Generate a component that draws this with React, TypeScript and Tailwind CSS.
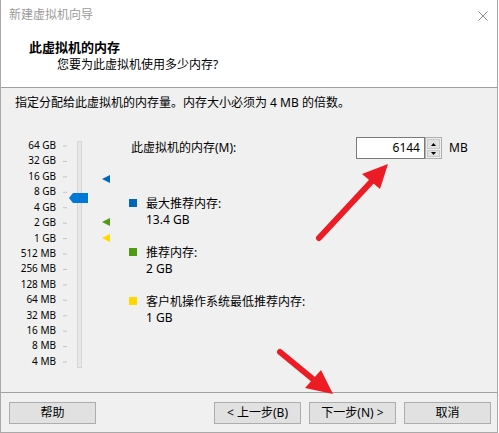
import React from 'react';

// Memory sizes shown along the slider, top to bottom
const sizes = [
  '64 GB', '32 GB', '16 GB', '8 GB', '4 GB', '2 GB', '1 GB',
  '512 MB', '256 MB', '128 MB', '64 MB', '32 MB', '16 MB', '8 MB', '4 MB',
];

const STEP = 15.43;

const legend = [
  { color: 'bg-[#0067b8]', title: '最大推荐内存:', value: '13.4 GB' },
  { color: 'bg-[#4f9a12]', title: '推荐内存:', value: '2 GB' },
  { color: 'bg-[#ffd800]', title: '客户机操作系统最低推荐内存:', value: '1 GB' },
];

const MemorySlider: React.FC = () => (
  <svg width="56" height="236" className="shrink-0">
    {sizes.map((_, i) => (
      <rect key={i} x="7" y={8.5 + i * STEP} width="4" height="1" fill="#c4c4c4" />
    ))}
    <rect x="21.5" y="4.5" width="4" height="226" fill="#e7e7e7" stroke="#d6d6d6" />
    <polygon points="13,61 17,56 32,56 32,66 17,66" fill="#0078d7" />
    <polygon points="46,42 54,38 54,46" fill="#0067b8" />
    <polygon points="46,85 54,81 54,89" fill="#4f9a12" />
    <polygon points="46,101 54,97 54,105" fill="#ffd800" />
  </svg>
);

const SpinBox: React.FC = () => (
  <div className="flex">
    <div className="w-[69px] h-[22px] border border-[#7a7a7a] bg-white flex items-center justify-end pr-[4px] text-[12px] leading-none">
      6144
    </div>
    <div className="w-[17px] h-[22px] flex flex-col border border-[#adadad] bg-[#f0f0f0]">
      <div className="h-[10px] m-[1px] mb-0 bg-[#e1e1e1] border border-[#c8c8c8] flex items-center justify-center">
        <svg width="5" height="3"><polygon points="2.5,0 5,3 0,3" fill="#000" /></svg>
      </div>
      <div className="flex-1 m-[1px] bg-[#e1e1e1] border border-[#c8c8c8] flex items-center justify-center">
        <svg width="5" height="3"><polygon points="0,0 5,0 2.5,3" fill="#000" /></svg>
      </div>
    </div>
  </div>
);

const WizardButton: React.FC<{ label: string; className?: string }> = ({ label, className }) => (
  <button
    type="button"
    className={`w-[87px] h-[22px] bg-[#e1e1e1] border border-[#adadad] text-[12px] leading-none text-black ${className ?? ''}`}
  >
    {label}
  </button>
);

const App: React.FC = () => {
  return (
    <div className="w-[499px] h-[433px] bg-white font-['Noto_Sans','Noto_Sans_CJK_SC',sans-serif] text-black">
      <div className="relative w-[498px] h-[433px] flex flex-col border-l border-r border-b border-[#a9a9a9]">
        {/* title bar */}
        <div className="h-[30px] flex items-center justify-between pl-[8px] pr-[9px] bg-white">
          <span className="text-[12px] text-[#9a9a9a] leading-none">新建虚拟机向导</span>
          <svg width="10" height="10" className="mt-[1px]">
            <path d="M0.5 0.5 L9.5 9.5 M9.5 0.5 L0.5 9.5" stroke="#8a8a8a" strokeWidth="1" />
          </svg>
        </div>

        {/* page header */}
        <div className="h-[58px] bg-white border-b border-[#a0a0a0] pl-[28px] pt-[8px]">
          <h1 className="text-[13px] font-bold leading-[18px]">此虚拟机的内存</h1>
          <p className="text-[12px] leading-[16px] mt-[1px] pl-[28px]">您要为此虚拟机使用多少内存?</p>
        </div>

        {/* body */}
        <div className="flex-1 bg-[#f0f0f0] flex flex-col">
          <p className="text-[12px] leading-[16px] mt-[7px] pl-[14px]">
            指定分配给此虚拟机的内存量。内存大小必须为 4 MB 的倍数。
          </p>

          <div className="flex mt-[26px]">
            <div className="w-[55px] pt-[1px] flex flex-col items-end text-[10px]">
              {sizes.map((s) => (
                <div key={s} className="h-[15.43px] leading-[15.43px] whitespace-nowrap">
                  {s}
                </div>
              ))}
            </div>

            <MemorySlider />

            <div className="ml-[17px] flex flex-col">
              <div className="flex items-center h-[22px]">
                <span className="w-[227px] pl-[2px] text-[12px] leading-none">此虚拟机的内存(M):</span>
                <SpinBox />
                <span className="ml-[7px] text-[12px] leading-none">MB</span>
              </div>

              <div className="flex flex-col gap-[17px] mt-[37px]">
                {legend.map((item) => (
                  <div key={item.title} className="flex items-start">
                    <span className={`w-[8px] h-[8px] mt-[3px] ${item.color}`} />
                    <div className="ml-[9px] text-[12px] leading-[16px]">
                      <div>{item.title}</div>
                      <div>{item.value}</div>
                    </div>
                  </div>
                ))}
              </div>
            </div>
          </div>
        </div>

        {/* footer buttons */}
        <div className="h-[40px] bg-[#f0f0f0] border-t border-[#a0a0a0] flex items-start pt-[9px] pl-[8px]">
          <WizardButton label="帮助" />
          <WizardButton label="< 上一步(B)" className="ml-[118px]" />
          <WizardButton label="下一步(N) >" className="ml-[8px]" />
          <WizardButton label="取消" className="ml-[8px]" />
        </div>

        {/* annotation arrows */}
        <svg className="absolute inset-0 pointer-events-none" width="499" height="433">
          <line x1="318" y1="238" x2="371" y2="181" stroke="#ed1c24" strokeWidth="6" strokeLinecap="round" />
          <polygon points="387,164 361,174 379,189" fill="#ed1c24" />
          <line x1="279" y1="352" x2="313" y2="380" stroke="#ed1c24" strokeWidth="6" strokeLinecap="round" />
          <polygon points="332,394 320,370 304,388" fill="#ed1c24" />
        </svg>
      </div>
    </div>
  );
};

export default App;
